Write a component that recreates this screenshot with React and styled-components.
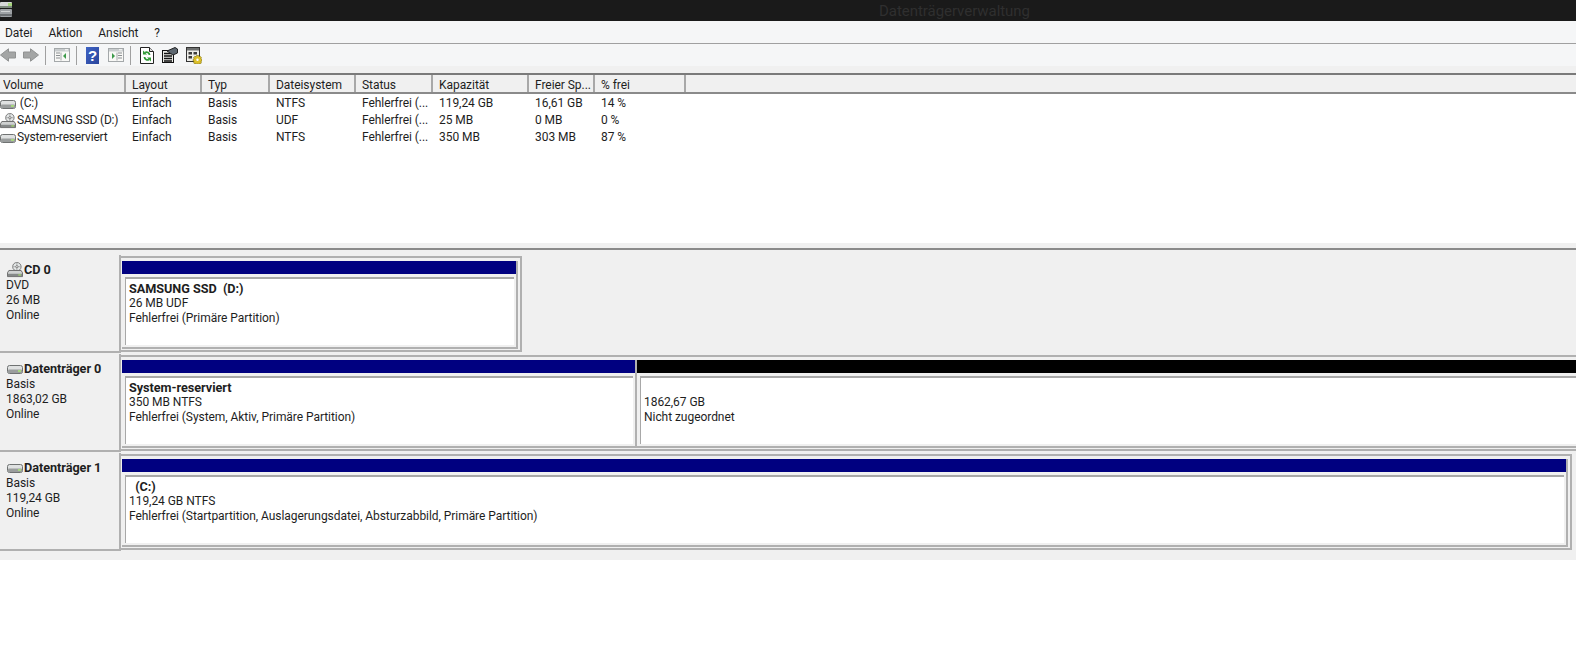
import React from "react";
import styled, { createGlobalStyle } from "styled-components";

const GlobalStyle = createGlobalStyle`
  html, body {
    margin: 0;
    padding: 0;
    background: #fff;
  }
  body {
    font-family: Roboto, "Noto Sans", "Liberation Sans", sans-serif;
    font-size: 12px;
    letter-spacing: -0.05px;
    color: #1e1e1e;
    overflow: hidden;
  }
`;

const columns = [
  { label: "Volume", width: 126 },
  { label: "Layout", width: 76 },
  { label: "Typ", width: 68 },
  { label: "Dateisystem", width: 86 },
  { label: "Status", width: 77 },
  { label: "Kapazität", width: 96 },
  { label: "Freier Sp...", width: 66 },
  { label: "% frei", width: 91 },
];

const volumes = [
  { icon: "hdd", name: "\u00a0(C:)", cells: ["Einfach", "Basis", "NTFS", "Fehlerfrei (...", "119,24 GB", "16,61 GB", "14 %"] },
  { icon: "cd", name: "SAMSUNG SSD (D:)", cells: ["Einfach", "Basis", "UDF", "Fehlerfrei (...", "25 MB", "0 MB", "0 %"] },
  { icon: "hdd", name: "System-reserviert", cells: ["Einfach", "Basis", "NTFS", "Fehlerfrei (...", "350 MB", "303 MB", "87 %"] },
];

const HddIcon = () => (
  <svg width="16" height="16" viewBox="0 0 16 16">
    <rect x="0.5" y="4.5" width="15" height="8" rx="2" fill="#dfe1e1" stroke="#6f7272" />
    <rect x="1" y="8.5" width="14" height="3.5" rx="1" fill="#9a9d9d" />
    <rect x="11" y="9" width="3" height="2" fill="#a6d67e" />
  </svg>
);

const CdIcon = () => (
  <svg width="16" height="16" viewBox="0 0 17 17">
    <circle cx="10.5" cy="5" r="4.5" fill="#e4e7e7" stroke="#777" />
    <path d="M10.5.5v9M6 5h9" stroke="#a5a8a8" />
    <circle cx="10.5" cy="5" r="1.2" fill="#fff" stroke="#777" />
    <path d="M2 9h13l1.5 2.5v4H.5v-4z" fill="#cfd1d1" stroke="#666" />
    <rect x="1" y="12.5" width="15" height="2.5" fill="#858888" />
    <rect x="12" y="13" width="3" height="1.5" fill="#9fd070" />
  </svg>
);

const TitleDiskIcon = () => (
  <svg width="13" height="18" viewBox="0 0 13 18">
    <rect x="0" y="2" width="12" height="6" rx="1" fill="#d6d8d8" />
    <rect x="0" y="6" width="12" height="2" fill="#7d8a7d" />
    <rect x="8" y="3" width="4" height="3" fill="#a7d67e" />
    <rect x="0" y="9" width="12" height="8" rx="1" fill="#9da1a4" />
    <rect x="1" y="11" width="9" height="1" fill="#cfd2d2" />
    <rect x="0" y="14" width="12" height="2" fill="#6d7174" />
  </svg>
);

const ArrowIcon = ({ flip }) => (
  <svg width="16" height="14" viewBox="0 0 16 14">
    <path
      d={flip ? "M.5 4h7V.8L15.5 7l-8 6.2V10h-7z" : "M15.5 4h-7V.8L.5 7l8 6.2V10h7z"}
      fill="#a3a5a5"
      stroke="#909292"
    />
  </svg>
);

const PaneIcon = ({ right }) => (
  <svg width="16" height="14" viewBox="0 0 16 14">
    <rect x="0.5" y="0.5" width="15" height="13" fill="#f8f8f6" stroke="#a4a8aa" />
    <rect x="1" y="1" width="14" height="2.5" fill="#c8ccce" />
    <path d="M11 1.8h3" stroke="#fff" />
    {right ? (
      <>
        <path d="M10 5h4M10 7.5h4M10 10h4" stroke="#8b8f92" />
        <path d="M9 4.5v8" stroke="#a4a8aa" />
        <path d="M4 5v6l3-3z" fill="#3d9a4a" />
      </>
    ) : (
      <>
        <path d="M2 5h4M2 7.5h4M2 10h4" stroke="#8b8f92" />
        <path d="M7 4.5v8" stroke="#a4a8aa" />
        <path d="M12 5v6L9 8z" fill="#3d9a4a" />
      </>
    )}
  </svg>
);

const HelpIcon = () => (
  <svg width="13" height="17" viewBox="0 0 13 17">
    <defs>
      <linearGradient id="helpBlue" x1="0" y1="0" x2="1" y2="1">
        <stop offset="0" stopColor="#3f63c4" />
        <stop offset="1" stopColor="#2a459c" />
      </linearGradient>
    </defs>
    <rect width="13" height="17" fill="url(#helpBlue)" />
    <text x="6.5" y="14" fontSize="15" fontWeight="700" textAnchor="middle" fill="#fff" fontFamily="Liberation Sans">?</text>
  </svg>
);

const RefreshIcon = () => (
  <svg width="14" height="17" viewBox="0 0 14 17">
    <path d="M.5.5h9l4 4v12H.5z" fill="#fff" stroke="#222" />
    <path d="M9.5.5v4h4" fill="#ddd" stroke="#222" />
    <path d="M9.5 8A3 3 0 0 0 5 5.5" fill="none" stroke="#2f9a35" strokeWidth="1.8" />
    <path d="M3 3.5v4h4z" fill="#2f9a35" />
    <path d="M4.5 10A3 3 0 0 0 9 12.5" fill="none" stroke="#2f9a35" strokeWidth="1.8" />
    <path d="M11 14.5v-4H7z" fill="#2f9a35" />
  </svg>
);

const PropsIcon = () => (
  <svg width="16" height="16" viewBox="0 0 16 16">
    <rect x="0.5" y="3.5" width="11" height="12" fill="#e9e9e4" stroke="#111" />
    <path d="M2 6.5h8M2 9h8M2 11.5h8M2 14h8" stroke="#111" strokeWidth="1.3" />
    <path d="M5 4 13 .5l2.5 1.5v4L11 8z" fill="#5d6770" stroke="#222" />
  </svg>
);

const SettingsIcon = () => (
  <svg width="16" height="17" viewBox="0 0 16 17">
    <rect x="0.5" y="0.5" width="13" height="14" fill="#eeeeea" stroke="#333" />
    <rect x="1" y="1" width="12" height="2.5" fill="#6e7070" />
    <path d="M2.5 5h3.5v2.5H2.5zM7.5 5H11v2.5H7.5zM2.5 9H6v2.5H2.5z" fill="#3c3c3c" />
    <path d="M10.5 8.5h2l.5 1.2 1.2-.4 1.2 1.2-.5 1.2 1 .7v1.6l-1 .6.5 1.2-1.2 1.2-1.2-.5-.5.5h-2l-.5-.5-1.2.5-1.2-1.2.5-1.2-1-.6v-1.6l1-.7-.5-1.2 1.2-1.2 1.2.4z" fill="#dcc02a" stroke="#7f7010" strokeWidth="0.6" />
    <circle cx="11.5" cy="12.8" r="1.2" fill="#fff" />
  </svg>
);

const Titlebar = styled.div`
  height: 21px;
  background: #1a1a1a;
  display: flex;
  align-items: center;
  justify-content: center;
  position: relative;
  color: #2f2f2f;
  font-size: 15px;
  padding-left: 333px;
  box-sizing: border-box;
`;

const TitleIcon = styled.span`
  position: absolute;
  left: 0;
  top: 0;
  display: flex;
`;

const Menu = styled.div`
  box-sizing: border-box;
  height: 23px;
  padding: 2px 0 0 5px;
  background: #f5f6f7;
  border-bottom: 1px solid #a0a0a0;
  display: flex;
  align-items: center;
  gap: 16px;
`;

const Toolbar = styled.div`
  height: 22px;
  background: #f5f6f7;
  display: flex;
  align-items: center;
`;

const ToolGroup = styled.div`
  display: flex;
  align-items: center;
  gap: ${(p) => p.$gap || 8}px;
`;

const ToolSep = styled.span`
  width: 1px;
  height: 19px;
  background: #a0a0a0;
  margin: 0 ${(p) => p.$after}px 0 6px;
`;

const Strip = styled.div`
  height: 7px;
  background: #f0f0f0;
`;

const Header = styled.div`
  display: flex;
  height: 17px;
  border-top: 2px solid #7a7a7a;
  border-bottom: 2px solid #8a8a8a;
  background: #f0f0f0;
`;

const HeaderCell = styled.div`
  box-sizing: border-box;
  width: ${(p) => p.$w}px;
  padding-left: ${(p) => p.$pad}px;
  border-right: 2px solid #a8a8a8;
  line-height: 20px;
  white-space: nowrap;
  overflow: hidden;
`;

const HeaderFill = styled.div`
  flex: 1;
`;

const List = styled.div`
  height: 148px;
  background: #fff;
  padding-top: 1px;
`;

const Row = styled.div`
  display: flex;
  height: 17px;
  line-height: 17px;
`;

const Cell = styled.div`
  box-sizing: border-box;
  width: ${(p) => p.$w}px;
  padding-left: 6px;
  white-space: nowrap;
  overflow: hidden;
`;

const NameCell = styled.div`
  box-sizing: border-box;
  width: 126px;
  display: flex;
  align-items: center;
  gap: 1px;
  letter-spacing: -0.18px;
  white-space: nowrap;
  overflow: hidden;
`;

const Splitter = styled.div`
  height: 5px;
  background: #f0f0f0;
  border-bottom: 2px solid #8a8a8a;
`;

const Graphic = styled.div`
  background: #f0f0f0;
  height: 310px;
  padding-top: 5px;
  box-sizing: border-box;
  display: flex;
  flex-direction: column;
  gap: 1px;
`;

const DiskRow = styled.div`
  display: flex;
  height: 98px;
`;

const DiskLabel = styled.div`
  box-sizing: border-box;
  width: 121px;
  flex: none;
  padding: 7px 0 0 6px;
  border-right: 2px solid #b0b0b0;
  border-bottom: 2px solid #b0b0b0;
  line-height: 15px;
  background: #f0f0f0;
`;

const DiskName = styled.div`
  display: flex;
  align-items: flex-end;
  gap: 1px;
  margin-left: 1px;
  font-size: 12.7px;
  font-weight: 700;
  line-height: 16px;
`;

const Parts = styled.div`
  flex: 1;
  min-width: 0;
  display: flex;
  padding-top: 1px;
`;

const Part = styled.div`
  box-sizing: border-box;
  width: ${(p) => (p.$w ? p.$w + "px" : "auto")};
  flex: ${(p) => (p.$w ? "none" : "1")};
  min-width: 0;
  height: 96px;
  padding: 3px ${(p) => (p.$open ? 0 : 2)}px 1px ${(p) => (p.$flush ? 0 : 1)}px;
  border-top: 2px solid #b0b0b0;
  border-bottom: 2px solid #b0b0b0;
  border-right: ${(p) => (p.$open ? "none" : "2px solid #b0b0b0")};
  background: #f0f0f0;
`;

const Frame = styled.div`
  box-sizing: border-box;
  height: 88px;
  border-right: ${(p) => (p.$edge ? "none" : "2px solid #b0b0b0")};
  border-bottom: 2px solid #b0b0b0;
`;

const Bar = styled.div`
  height: 13px;
  background: ${(p) => p.$color};
`;

const PartBody = styled.div`
  box-sizing: border-box;
  height: 68px;
  margin: 3px ${(p) => (p.$edge ? 0 : 2)}px 0 3px;
  background: #fff;
  border-top: 2px solid #a8a8a8;
  border-left: 1px solid #a8a8a8;
  padding: 2px 0 0 3px;
  line-height: 15px;
  white-space: nowrap;
  overflow: hidden;
`;

const PartName = styled.div`
  font-size: 12.7px;
  font-weight: 700;
  min-height: 15px;
`;

const disks = [
  {
    name: "CD 0",
    icon: <CdIcon />,
    lines: ["DVD", "26 MB", "Online"],
    parts: [
      { w: 401, color: "#000080", title: "SAMSUNG SSD\u00a0\u00a0(D:)", lines: ["26 MB UDF", "Fehlerfrei (Primäre Partition)"] },
    ],
  },
  {
    name: "Datenträger 0",
    icon: <HddIcon />,
    lines: ["Basis", "1863,02 GB", "Online"],
    parts: [
      { w: 516, color: "#000080", title: "System-reserviert", lines: ["350 MB NTFS", "Fehlerfrei (System, Aktiv, Primäre Partition)"], open: true },
      { color: "#000", title: "", lines: ["1862,67 GB", "Nicht zugeordnet"], open: true, flush: true, edge: true },
    ],
  },
  {
    name: "Datenträger 1",
    icon: <HddIcon />,
    lines: ["Basis", "119,24 GB", "Online"],
    parts: [
      { w: 1451, color: "#000080", title: "\u00a0\u00a0(C:)", lines: ["119,24 GB NTFS", "Fehlerfrei (Startpartition, Auslagerungsdatei, Absturzabbild, Primäre Partition)"] },
    ],
  },
];

function VolumeIcon({ kind }) {
  return kind === "cd" ? <CdIcon /> : <HddIcon />;
}

export default function App() {
  return (
    <>
      <GlobalStyle />
      <Titlebar>
        <TitleIcon>
          <TitleDiskIcon />
        </TitleIcon>
        Datenträgerverwaltung
      </Titlebar>
      <Menu>
        <span>Datei</span>
        <span>Aktion</span>
        <span>Ansicht</span>
        <span>?</span>
      </Menu>
      <Toolbar>
        <ToolGroup $gap={7}>
          <ArrowIcon />
          <ArrowIcon flip />
        </ToolGroup>
        <ToolSep $after={8} />
        <PaneIcon />
        <ToolSep $after={9} />
        <ToolGroup $gap={9}>
          <HelpIcon />
          <PaneIcon right />
        </ToolGroup>
        <ToolSep $after={9} />
        <ToolGroup $gap={8}>
          <RefreshIcon />
          <PropsIcon />
          <SettingsIcon />
        </ToolGroup>
      </Toolbar>
      <Strip />
      <Header>
        {columns.map((c, i) => (
          <HeaderCell key={c.label} $w={c.width} $pad={i === 0 ? 3 : 6}>
            {c.label}
          </HeaderCell>
        ))}
        <HeaderFill />
      </Header>
      <List>
        {volumes.map((v) => (
          <Row key={v.name}>
            <NameCell>
              <VolumeIcon kind={v.icon} />
              {v.name}
            </NameCell>
            {v.cells.map((text, i) => (
              <Cell key={i} $w={columns[i + 1].width}>
                {text}
              </Cell>
            ))}
          </Row>
        ))}
      </List>
      <Splitter />
      <Graphic>
        {disks.map((d) => (
          <DiskRow key={d.name}>
            <DiskLabel>
              <DiskName>
                {d.icon}
                {d.name}
              </DiskName>
              {d.lines.map((l) => (
                <div key={l}>{l}</div>
              ))}
            </DiskLabel>
            <Parts>
              {d.parts.map((p) => (
                <Part key={p.lines[0]} $w={p.w} $open={p.open} $flush={p.flush}>
                  <Frame $edge={p.edge}>
                    <Bar $color={p.color} />
                    <PartBody $edge={p.edge}>
                      <PartName>{p.title}</PartName>
                      {p.lines.map((l) => (
                        <div key={l}>{l}</div>
                      ))}
                    </PartBody>
                  </Frame>
                </Part>
              ))}
            </Parts>
          </DiskRow>
        ))}
      </Graphic>
    </>
  );
}
